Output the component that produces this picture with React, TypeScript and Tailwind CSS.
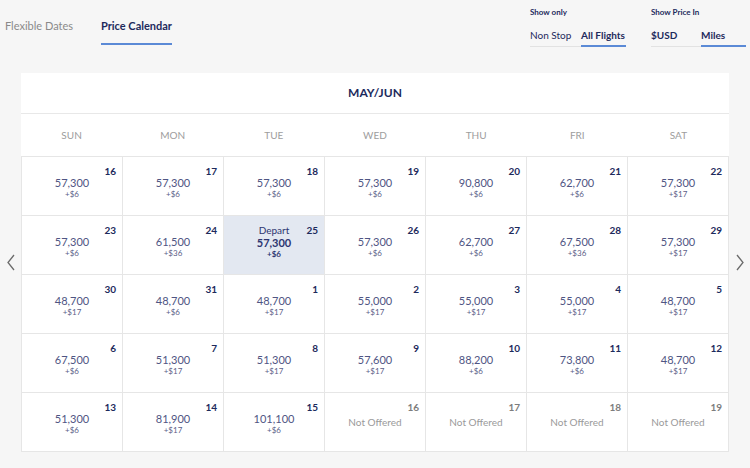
import React from "react";

type Cell = { d: number; p?: string; f?: string; sel?: boolean };

const rows: Cell[][] = [
  [
    { d: 16, p: "57,300", f: "+$6" },
    { d: 17, p: "57,300", f: "+$6" },
    { d: 18, p: "57,300", f: "+$6" },
    { d: 19, p: "57,300", f: "+$6" },
    { d: 20, p: "90,800", f: "+$6" },
    { d: 21, p: "62,700", f: "+$6" },
    { d: 22, p: "57,300", f: "+$17" },
  ],
  [
    { d: 23, p: "57,300", f: "+$6" },
    { d: 24, p: "61,500", f: "+$36" },
    { d: 25, p: "57,300", f: "+$6", sel: true },
    { d: 26, p: "57,300", f: "+$6" },
    { d: 27, p: "62,700", f: "+$6" },
    { d: 28, p: "67,500", f: "+$36" },
    { d: 29, p: "57,300", f: "+$17" },
  ],
  [
    { d: 30, p: "48,700", f: "+$17" },
    { d: 31, p: "48,700", f: "+$6" },
    { d: 1, p: "48,700", f: "+$17" },
    { d: 2, p: "55,000", f: "+$17" },
    { d: 3, p: "55,000", f: "+$17" },
    { d: 4, p: "55,000", f: "+$17" },
    { d: 5, p: "48,700", f: "+$17" },
  ],
  [
    { d: 6, p: "67,500", f: "+$6" },
    { d: 7, p: "51,300", f: "+$17" },
    { d: 8, p: "51,300", f: "+$17" },
    { d: 9, p: "57,600", f: "+$17" },
    { d: 10, p: "88,200", f: "+$6" },
    { d: 11, p: "73,800", f: "+$6" },
    { d: 12, p: "48,700", f: "+$17" },
  ],
  [
    { d: 13, p: "51,300", f: "+$6" },
    { d: 14, p: "81,900", f: "+$17" },
    { d: 15, p: "101,100", f: "+$6" },
    { d: 16 },
    { d: 17 },
    { d: 18 },
    { d: 19 },
  ],
];

const days = ["SUN", "MON", "TUE", "WED", "THU", "FRI", "SAT"];

function DayCell({ c }: { c: Cell }) {
  const offered = !!c.p;
  return (
    <div className={`relative h-[59px] border-r border-b border-[#e6e6e6] ${c.sel ? "bg-[#e3e8f1]" : "bg-white"}`}>
      <span className={`absolute right-[6px] top-[8px] text-[10px] font-bold leading-[12px] ${offered ? "text-[#1d2a5c]" : "text-[#7d7d7d]"}`}>{c.d}</span>
      {!offered ? (
        <div className="flex flex-col items-center pt-[23px] text-[10px] leading-[12px] text-[#9a9a9a]">Not Offered</div>
      ) : c.sel ? (
        <div className="flex flex-col items-center pt-[8px] text-[#2d3570]">
          <span className="text-[10px] leading-[12px]">Depart</span>
          <span className="text-[11px] font-bold leading-[13px]">{c.p}</span>
          <span className="text-[8px] font-bold leading-[10px]">{c.f}</span>
        </div>
      ) : (
        <div className="flex flex-col items-center pt-[19px]">
          <span className="text-[11px] leading-[13px] text-[#4f5583]">{c.p}</span>
          <span className="text-[8px] leading-[10px] text-[#5c6188]">{c.f}</span>
        </div>
      )}
    </div>
  );
}

function Chevron({ dir }: { dir: "l" | "r" }) {
  return (
    <svg width="10" height="17" viewBox="0 0 10 17" fill="none" stroke="#6b6b6b" strokeWidth="1.3">
      {dir === "l" ? <path d="M8 1 L2 8.5 L8 16" /> : <path d="M2 1 L8 8.5 L2 16" />}
    </svg>
  );
}

export default function App() {
  return (
    <div className="h-[468px] w-[750px] overflow-hidden bg-[#f6f6f6] font-['Lato','Liberation_Sans',sans-serif]">
      <div className="flex h-[73px]">
        <div className="flex items-start pl-[5px] pt-[18px]">
          <span className="w-[96px] text-[11px] leading-[15px] text-[#8a8a8a]">Flexible Dates</span>
          <div className="flex flex-col">
            <span className="text-[11px] font-bold leading-[15px] text-[#1d2a5c]">Price Calendar</span>
            <span className="mt-[10px] h-[2px] w-full bg-[#5b8ad6]" />
          </div>
        </div>
        <div className="ml-auto mr-[4px] flex pt-[7px]">
          <div className="flex flex-col">
            <span className="text-[8px] font-bold leading-[10px] text-[#1d2a5c]">Show only</span>
            <div className="mt-[12px] flex items-end">
              <div className="flex w-[51px] flex-col">
                <span className="text-[10px] leading-[13px] text-[#1d2a5c]">Non Stop</span>
                <span className="mt-[4px] h-[1px] w-full bg-[#e2e2e2]" />
              </div>
              <div className="flex w-[45px] flex-col">
                <span className="text-[10px] font-bold leading-[13px] text-[#1d2a5c]">All Flights</span>
                <span className="mt-[3px] h-[2px] w-full bg-[#5b8ad6]" />
              </div>
            </div>
          </div>
          <div className="ml-[25px] flex flex-col">
            <span className="text-[8px] font-bold leading-[10px] text-[#1d2a5c]">Show Price In</span>
            <div className="mt-[12px] flex items-end">
              <div className="flex w-[50px] flex-col">
                <span className="text-[10px] font-bold leading-[13px] text-[#1d2a5c]">$USD</span>
                <span className="mt-[4px] h-[1px] w-full bg-[#e2e2e2]" />
              </div>
              <div className="flex w-[45px] flex-col">
                <span className="text-[10px] font-bold leading-[13px] text-[#1d2a5c]">Miles</span>
                <span className="mt-[3px] h-[2px] w-full bg-[#5b8ad6]" />
              </div>
            </div>
          </div>
        </div>
      </div>

      <div className="flex">
        <div className="flex w-[21px] items-center justify-center">
          <Chevron dir="l" />
        </div>
        <div className="w-[708px] bg-white">
          <div className="flex h-[41px] items-center justify-center border-b border-[#e8e8e8]">
            <span className="text-[12px] font-bold text-[#1d2a5c]">MAY/JUN</span>
          </div>
          <div className="grid h-[43px] grid-cols-7 items-center border-b border-[#e6e6e6]">
            {days.map((d) => (
              <span key={d} className="text-center text-[10px] text-[#9d9d9d]">{d}</span>
            ))}
          </div>
          <div className="grid grid-cols-7 border-l border-[#e6e6e6]">
            {rows.flat().map((c, i) => (
              <DayCell key={i} c={c} />
            ))}
          </div>
        </div>
        <div className="flex w-[21px] items-center justify-center">
          <Chevron dir="r" />
        </div>
      </div>
    </div>
  );
}
